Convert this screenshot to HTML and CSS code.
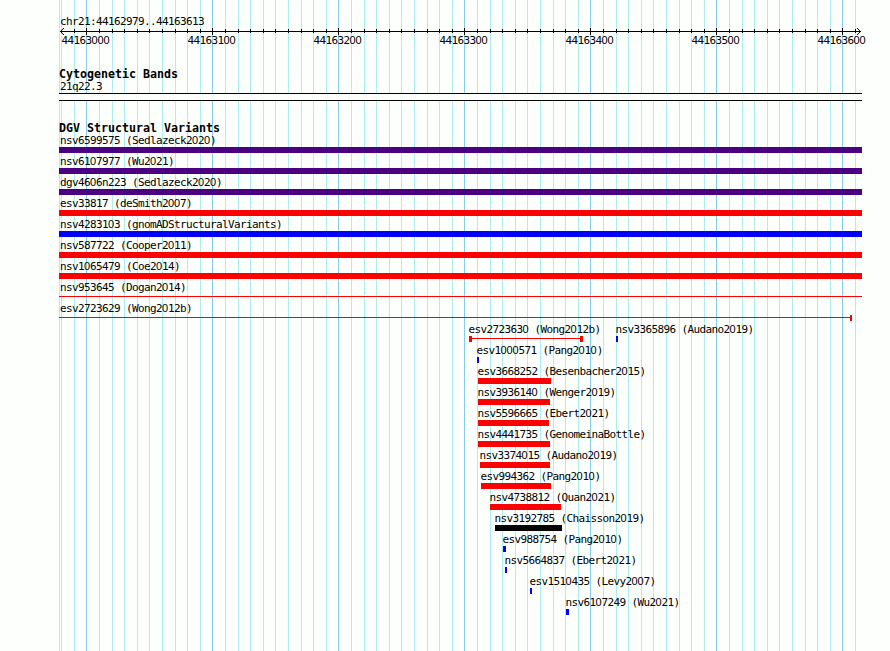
FILE: index.html
```html
<!DOCTYPE html>
<html lang="en">
<head>
<meta charset="utf-8">
<title>chr21:44162979..44163613</title>
<link rel="stylesheet" href="styles.css">
</head>
<body>
<main class="browser">
  <svg class="grid" id="grid" width="803" height="651" shape-rendering="crispEdges"></svg>
  <section class="ruler">
    <div class="label">chr21:44162979..44163613</div>
    <svg class="axis" id="axis" width="803" height="9" shape-rendering="crispEdges"></svg>
    <div class="ticks">
      <span class="label">44163000</span><span class="label">44163100</span><span class="label">44163200</span><span class="label">44163300</span><span class="label">44163400</span><span class="label">44163500</span><span class="label">44163600</span>
    </div>
  </section>
  <section class="bands">
    <h2>Cytogenetic Bands</h2>
    <div class="label">21q22.3</div>
    <div class="band"></div>
  </section>
  <section class="variants">
    <h2>DGV Structural Variants</h2>
    <div id="rows"></div>
  </section>
</main>
<script src="script.js"></script>
</body>
</html>
```
FILE: styles.css
```css
* { box-sizing: border-box; }
body { margin: 0; background: #fdfffc; color: #000; }
.browser {
  position: relative;
  width: 810px;
  height: 651px;
  margin-left: 59px;
  font-family: "DejaVu Sans Mono", monospace;
}
.grid { position: absolute; left: 0; top: 0; z-index: -1; }
.label {
  height: 12px;
  padding-left: 1px;
  font-size: 11px;
  line-height: 12px;
  letter-spacing: -0.622px;
  white-space: pre;
}
.zero {
  font-family: "Liberation Sans", sans-serif;
  letter-spacing: -0.117px;
  line-height: 0;
}
h2 {
  height: 13px;
  margin: 0;
  font-size: 11.63px;
  line-height: 13px;
  white-space: pre;
}
.ruler { height: 68px; padding-top: 16px; }
.axis { display: block; margin-top: -1px; }
.ticks { display: flex; padding-left: 1.5px; margin-top: -1px; }
.ticks .label { flex: 0 0 126px; }
.ticks .label:last-child { flex-basis: 50px; }
.bands { height: 54px; }
.band { width: 803px; height: 8px; border: solid #000; border-width: 1px 0; background: #fdfffc; }
.row { height: 21px; display: grid; grid-template-rows: 21px; }
.item { grid-area: 1 / 1; width: max-content; }
.item.inner .label { padding-left: 0; margin-left: -0.5px; }
.bar { height: 6px; }
.thin { display: flex; align-items: flex-start; }
.thin::before { content: ""; flex: 1; order: 1; height: 1px; margin-top: 2px; background: #f00; }
.cap { width: 3px; height: 6px; background: #f00; }
.cap.start { order: 0; }
.cap.end { order: 2; }
.cap.slim { width: 2px; }
.red { background: #f00; }
.blue { background: #00f; }
.indigo { background: #4b0082; }
.black { background: #000; }
```
FILE: script.js
```js
const NS = "http://www.w3.org/2000/svg";
const steps = [0, 13, 26, 38, 51, 63, 76, 89, 101, 114];

function rect(svg, x, y, w, h, fill) {
  const r = document.createElementNS(NS, "rect");
  Object.entries({ x, y, width: w, height: h, fill }).forEach(([k, v]) => r.setAttribute(k, v));
  svg.append(r);
}

const positions = [[2, false], [15, false]];
for (let major = 27; major < 803; major += 126) {
  steps.forEach((s, i) => { if (major + s < 800) positions.push([major + s, i === 0]); });
}

const grid = document.getElementById("grid");
const axis = document.getElementById("axis");
rect(grid, 0, 0, 1, 651, "#afeeee");
positions.forEach(([x, major]) => {
  rect(grid, x, 0, 1, 651, major ? "#87ceeb" : "#afeeee");
  if (x > 2) rect(axis, x, major ? 1 : 2, 1, major ? 7 : 4, "#000");
});
rect(axis, 1, 4, 801, 1, "#000");
[1, 2, 3].forEach(i => {
  rect(axis, 1 + i, 4 - i, 1, 1, "#000");
  rect(axis, 1 + i, 4 + i, 1, 1, "#000");
  rect(axis, 801 - i, 4 - i, 1, 1, "#000");
  rect(axis, 801 - i, 4 + i, 1, 1, "#000");
});

// Each row holds [name, start, end, colour, style], in track pixels.
const rows = [
  [["nsv6599575 (Sedlazeck2020)", 0, 803, "indigo"]],
  [["nsv6107977 (Wu2021)", 0, 803, "indigo"]],
  [["dgv4606n223 (Sedlazeck2020)", 0, 803, "indigo"]],
  [["esv33817 (deSmith2007)", 0, 803, "red"]],
  [["nsv4283103 (gnomADStructuralVariants)", 0, 803, "blue"]],
  [["nsv587722 (Cooper2011)", 0, 803, "red"]],
  [["nsv1065479 (Coe2014)", 0, 803, "red"]],
  [["nsv953645 (Dogan2014)", 0, 803, "", "line"]],
  [["esv2723629 (Wong2012b)", 0, 793, "", "end"]],
  [["esv2723630 (Wong2012b)", 410, 524, "", "both"], ["nsv3365896 (Audano2019)", 557, 559, "blue"]],
  [["esv1000571 (Pang2010)", 418, 420, "blue"]],
  [["esv3668252 (Besenbacher2015)", 419, 492, "red"]],
  [["nsv3936140 (Wenger2019)", 419, 491, "red"]],
  [["nsv5596665 (Ebert2021)", 419, 490, "red"]],
  [["nsv4441735 (GenomeinaBottle)", 419, 491, "red"]],
  [["nsv3374015 (Audano2019)", 421, 491, "red"]],
  [["esv994362 (Pang2010)", 422, 492, "red"]],
  [["nsv4738812 (Quan2021)", 431, 502, "red"]],
  [["nsv3192785 (Chaisson2019)", 436, 503, "black"]],
  [["esv988754 (Pang2010)", 444, 447, "blue"]],
  [["nsv5664837 (Ebert2021)", 446, 448, "blue"]],
  [["esv1510435 (Levy2007)", 471, 473, "blue"]],
  [["nsv6107249 (Wu2021)", 507, 510, "blue"]]
];

const caps = {
  line: "",
  end: '<i class="cap end slim"></i>',
  both: '<i class="cap start"></i><i class="cap end"></i>'
};
document.getElementById("rows").innerHTML = rows.map(items =>
  '<div class="row">' + items.map(([name, a, b, colour, style]) =>
    `<div class="item${a ? " inner" : ""}" style="margin-left:${a}px"><div class="label">${name}</div>` +
    `<div class="bar ${style ? "thin" : colour}" style="width:${b - a}px">${style ? caps[style] : ""}</div></div>`
  ).join("") + "</div>"
).join("");

// Plain, undotted zeros in the label face.
document.querySelectorAll(".label").forEach(el => {
  el.innerHTML = el.textContent.replace(/0/g, '<span class="zero">0</span>');
});
```
